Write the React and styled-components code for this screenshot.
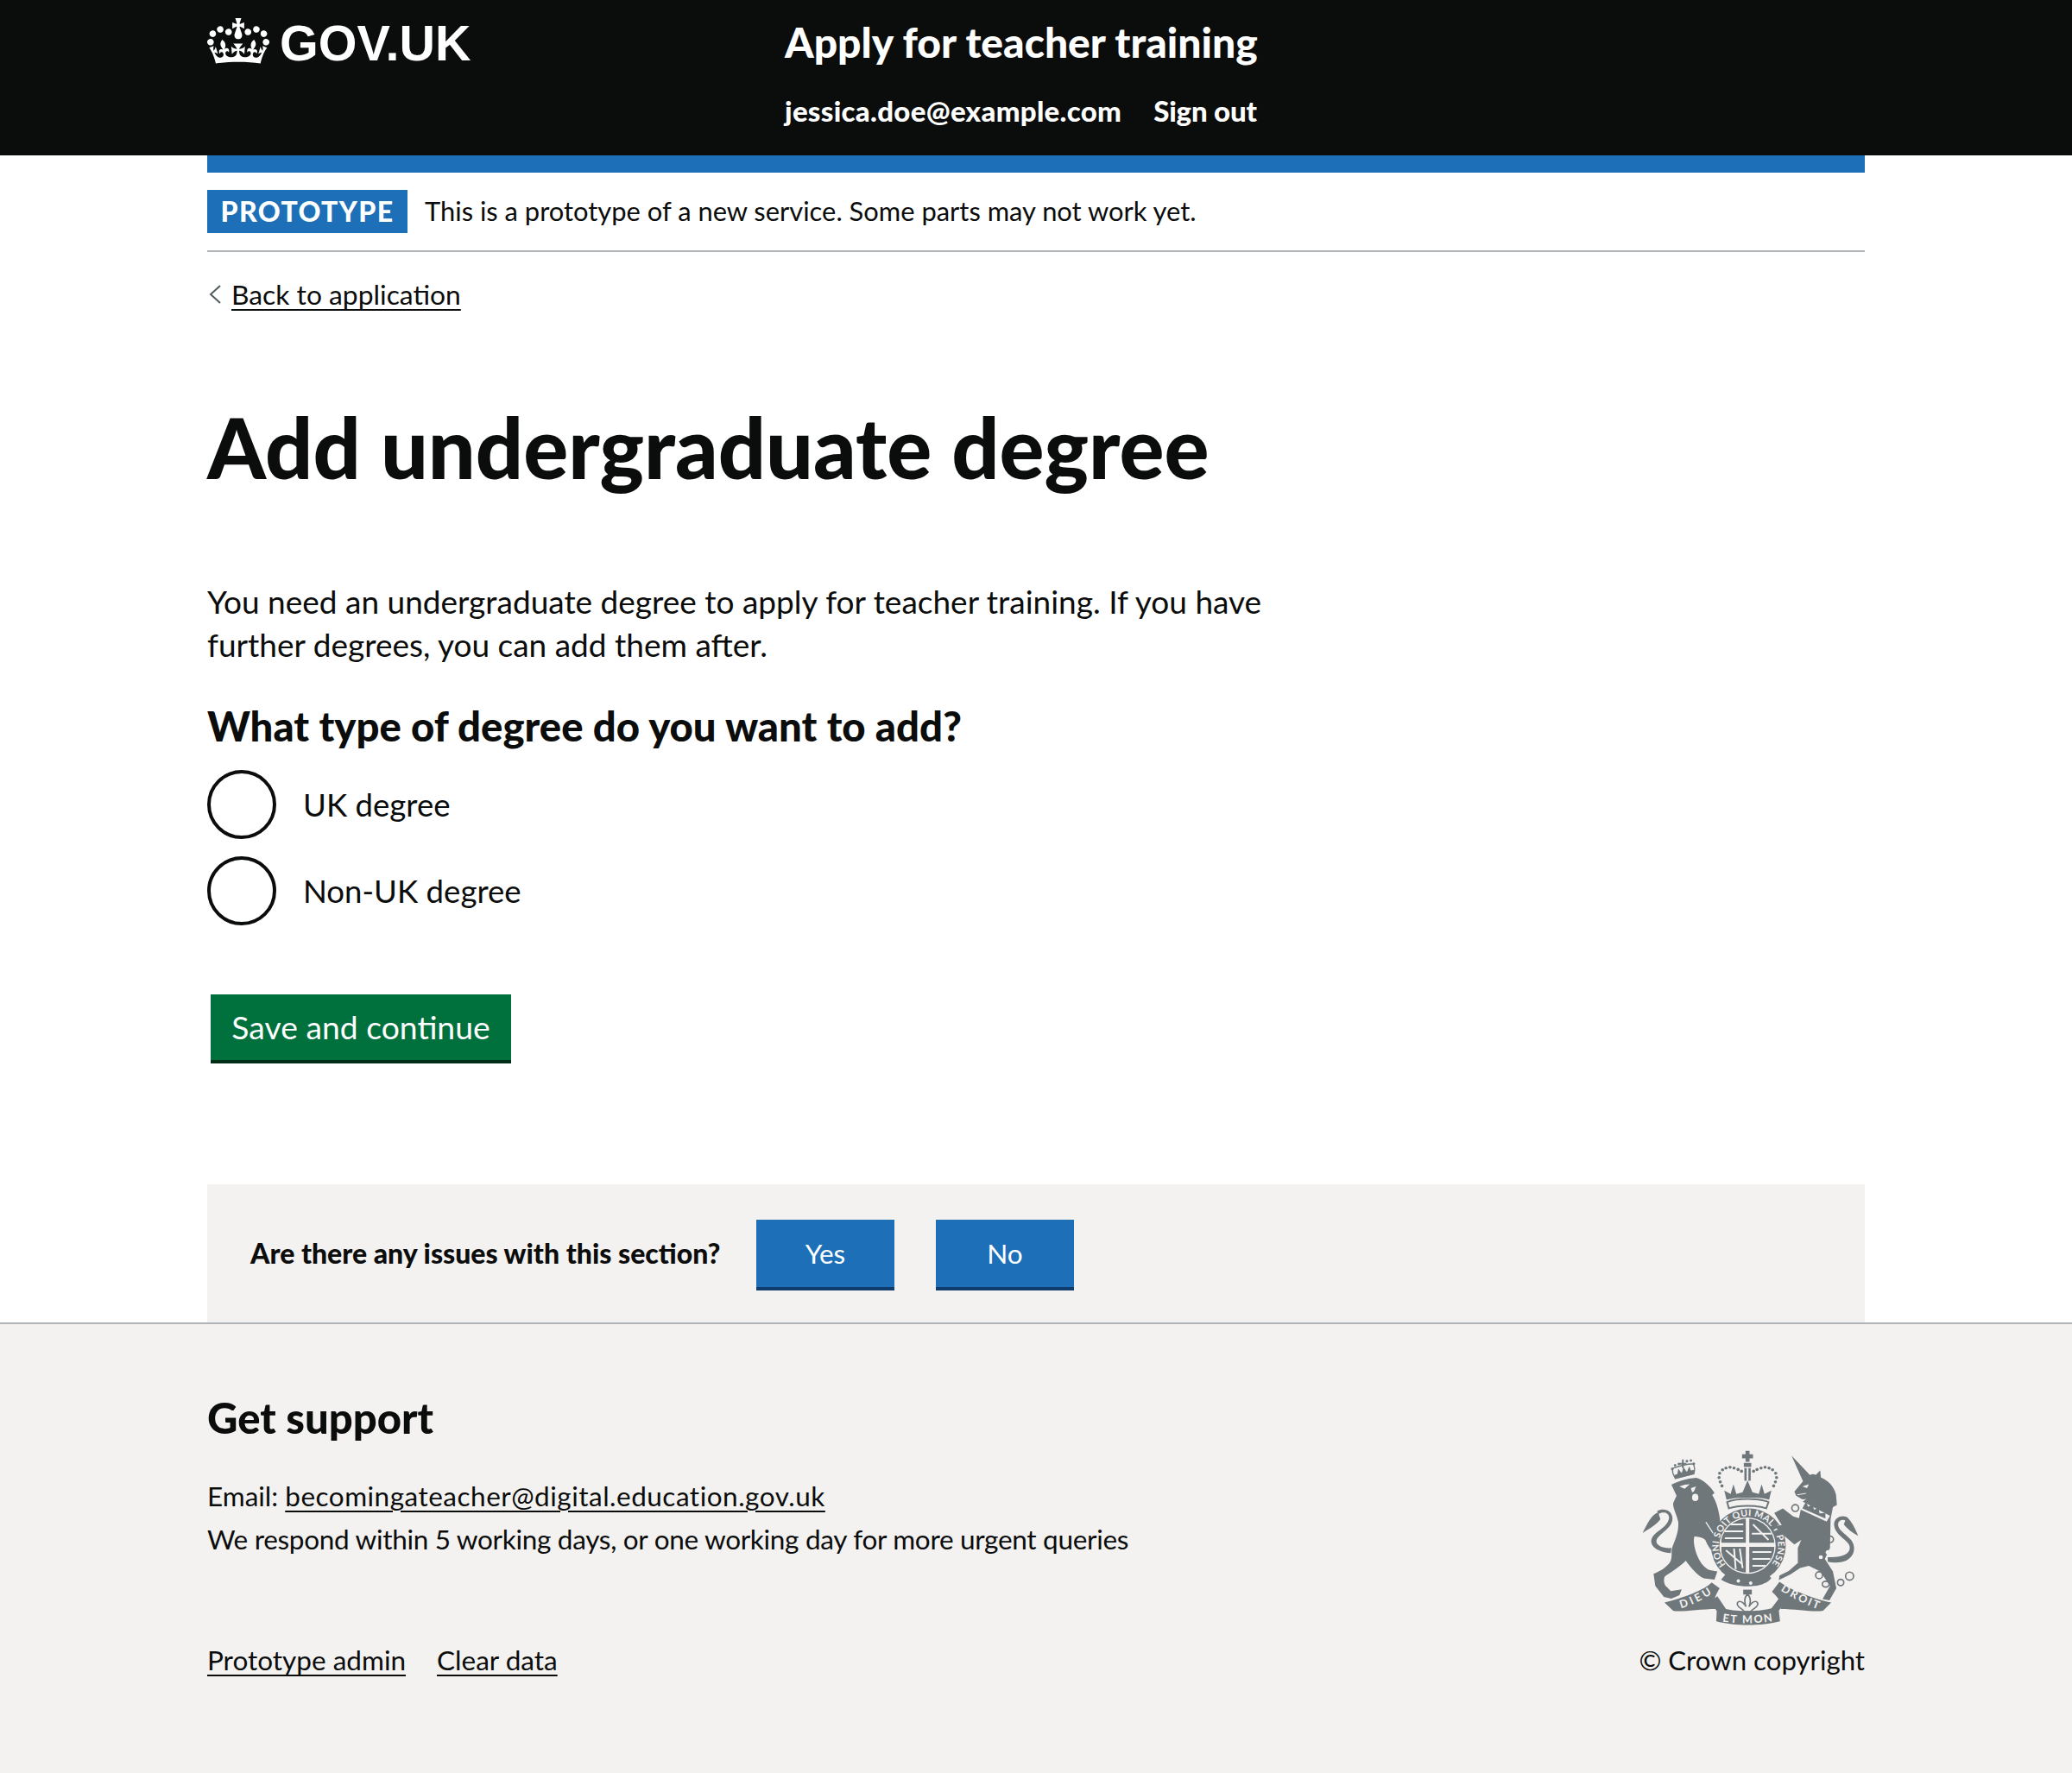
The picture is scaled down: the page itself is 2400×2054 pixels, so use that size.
import React from 'react';
import styled, { createGlobalStyle } from 'styled-components';

const GlobalStyle = createGlobalStyle`
  * { box-sizing: border-box; }
  body {
    margin: 0;
    background: #fff;
    color: #0b0c0c;
    font-family: Lato, "Noto Sans", Arial, sans-serif;
  }
  a { color: #0b0c0c; text-decoration-thickness: 2px; text-underline-offset: 5px; }
`;

const Page = styled.div`
  min-height: 2054px;
  display: flex;
  flex-direction: column;
`;

const Container = styled.div`
  width: 1920px;
  margin: 0 auto;
`;

const Header = styled.header`
  background: #0b0c0c;
  height: 180px;
  color: #fff;
`;

const HeaderInner = styled(Container)`
  display: flex;
`;

const Logo = styled.a`
  width: 669px;
  flex: none;
  display: flex;
  gap: 12px;
  padding-top: 21px;
  color: #fff;
  text-decoration: none;
`;

const Crown = styled.svg`
  width: 72px;
  height: 53px;
  fill: currentColor;
`;

const LogoText = styled.span`
  font-family: "Liberation Sans", Arial, sans-serif;
  font-weight: 700;
  font-size: 57.5px;
  line-height: 58px;
`;

const ServiceColumn = styled.div`
  padding-top: 18px;
`;

const ServiceName = styled.a`
  display: block;
  color: #fff;
  text-decoration: none;
  font-weight: 900;
  font-size: 48px;
  line-height: 62px;
`;

const HeaderNav = styled.nav`
  display: flex;
  gap: 37px;
  margin-top: 28px;
`;

const NavLink = styled.a`
  color: #fff;
  text-decoration: none;
  font-weight: 900;
  font-size: 33px;
  line-height: 40px;
  letter-spacing: ${p => p.$track || 0}px;
`;

const BlueBar = styled.div`
  height: 20px;
  background: #1d70b8;
`;

const PhaseBanner = styled.div`
  display: flex;
  align-items: center;
  gap: 20px;
  padding: 20px 0;
  border-bottom: 2px solid #b1b4b6;
`;

const PhaseTag = styled.strong`
  width: 232px;
  height: 50px;
  background: #1d70b8;
  color: #fff;
  font-size: 32px;
  line-height: 50px;
  font-weight: 900;
  letter-spacing: 1.4px;
  text-align: center;
`;

const BodySmall = styled.span`
  font-size: 30.9px;
  line-height: 50px;
`;

const BackLink = styled.a`
  display: flex;
  align-items: center;
  gap: 12px;
  margin-top: 29px;
  padding-left: 2px;
  width: max-content;
  font-size: 31.8px;
  line-height: 40px;
  text-decoration: none;

  span { text-decoration: underline; text-decoration-thickness: 2px; text-underline-offset: 5px; }
`;

const Chevron = styled.svg`
  width: 14px;
  height: 22px;
  fill: none;
  stroke: #505a5f;
  stroke-width: 2;
`;

const Heading = styled.h1`
  margin: 107px 0 104px;
  font-size: 97px;
  line-height: 100px;
  font-weight: 900;
`;

const Lead = styled.p`
  width: 1280px;
  margin: 0 0 44px;
  font-size: 37px;
  line-height: 50px;
`;

const Question = styled.h2`
  margin: 0 0 26px;
  font-size: 47.3px;
  line-height: 50px;
  font-weight: 900;
`;

const RadioList = styled.div`
  display: flex;
  flex-direction: column;
  gap: 20px;
`;

const RadioRow = styled.label`
  display: flex;
  align-items: center;
  gap: 31px;
  height: 80px;
  font-size: 36.6px;
`;

const RadioCircle = styled.span`
  width: 80px;
  height: 80px;
  border: 4px solid #0b0c0c;
  border-radius: 50%;
  background: #fff;
`;

const Button = styled.button`
  display: block;
  border: 0;
  border-radius: 0;
  color: #fff;
  font-family: inherit;
  cursor: pointer;
`;

const SaveButton = styled(Button)`
  width: 348px;
  height: 76px;
  margin: 80px 0 0 4px;
  background: #00703c;
  box-shadow: 0 4px 0 #002d18;
  font-size: 37.3px;
  line-height: 50px;
  padding: 0;
`;

const FeedbackPanel = styled(Container)`
  display: flex;
  align-items: center;
  height: 160px;
  margin-top: 144px;
  padding-left: 50px;
  background: #f3f2f1;
`;

const FeedbackLabel = styled.strong`
  width: 586px;
  font-size: 32px;
  line-height: 40px;
  font-weight: 900;
`;

const FeedbackButton = styled(Button)`
  width: 160px;
  height: 78px;
  margin: 0 48px 0 0;
  background: #1d70b8;
  box-shadow: 0 4px 0 #0e3c6c;
  font-size: 31.5px;
`;

const Footer = styled.footer`
  flex: 1;
  background: #f3f2f1;
  border-top: 2px solid #b1b4b6;
  padding-top: 83px;
`;

const FooterInner = styled(Container)`
  display: flex;
  justify-content: space-between;
  align-items: flex-end;
`;

const FooterHeading = styled.h2`
  margin: 0 0 41px;
  font-size: 49px;
  line-height: 50px;
  font-weight: 900;
`;

const FooterText = styled.p`
  margin: 0;
  font-size: 31.5px;
  line-height: 50px;
  letter-spacing: ${p => p.$track || 0}px;
`;

const FooterEmail = styled.a`
  letter-spacing: 0.5px;
`;

const MetaLinks = styled.div`
  display: flex;
  gap: 36px;
  margin-top: 95px;
`;

const MetaLink = styled.a`
  font-size: 31.5px;
  line-height: 40px;
`;

const CopyrightColumn = styled.div`
  display: flex;
  flex-direction: column;
  align-items: flex-end;
`;

const Arms = styled.svg`
  display: block;
  width: 253px;
  height: 205px;
  margin: 0 5px 18px 0;
`;

const Copyright = styled.a`
  font-size: 31.2px;
  line-height: 40px;
  text-decoration: none;
`;

const crownPath = 'M25 30.2c3.5 1.5 7.7-.2 9.1-3.7 1.5-3.6-.2-7.8-3.9-9.2-3.6-1.4-7.6.3-9.1 3.9-1.4 3.5.3 7.5 3.9 9zM9 39.5c3.6 1.5 7.8-.2 9.2-3.7 1.5-3.6-.2-7.8-3.9-9.1-3.6-1.5-7.6.2-9.1 3.8-1.4 3.5.3 7.5 3.8 9zM4.4 57.2c3.5 1.5 7.7-.2 9.1-3.8 1.5-3.6-.2-7.7-3.9-9.1-3.5-1.5-7.6.3-9.1 3.8-1.4 3.5.3 7.6 3.9 9.1zm38.3-21.4c3.5 1.5 7.7-.2 9.1-3.8 1.5-3.6-.2-7.7-3.9-9.1-3.6-1.5-7.6.3-9.1 3.8-1.3 3.6.4 7.7 3.9 9.1zm64.4-5.6c-3.6 1.5-7.8-.2-9.1-3.7-1.5-3.6.2-7.8 3.8-9.2 3.6-1.4 7.7.3 9.2 3.9 1.3 3.5-.4 7.5-3.9 9zm15.9 9.3c-3.6 1.5-7.7-.2-9.1-3.7-1.5-3.6.2-7.8 3.7-9.1 3.6-1.5 7.7.2 9.2 3.8 1.5 3.5-.3 7.5-3.8 9zm4.7 17.7c-3.6 1.5-7.8-.2-9.2-3.8-1.5-3.6.2-7.7 3.9-9.1 3.6-1.5 7.7.3 9.2 3.8 1.3 3.5-.4 7.6-3.9 9.1zM89.3 35.8c-3.6 1.5-7.8-.2-9.2-3.8-1.4-3.6.2-7.7 3.9-9.1 3.6-1.5 7.7.3 9.2 3.8 1.4 3.6-.3 7.7-3.9 9.1zM69.7 17.7l8.9 4.7V9.3l-8.9 2.8c-.2-.3-.5-.6-.9-.9L72.4 0H59.6l3.5 11.2c-.3.3-.6.5-.9.9l-8.8-2.8v13.1l8.8-4.7c.3.3.6.7.9.9l-5 15.4v.1c-.2.8-.4 1.6-.4 2.4 0 4.1 3.1 7.5 7 8.1h.2c.3 0 .7.1 1 .1.4 0 .7 0 1-.1h.2c4-.6 7.1-4.1 7.1-8.1 0-.8-.1-1.7-.4-2.4V34l-5.1-15.4c.4-.2.7-.6 1-.9zM66 92.8c16.9 0 32.8 1.1 47.1 3.2 4-16.9 8.9-26.7 14-33.5l-9.6-3.4c1 4.9 1.1 7.2 0 10.2-1.5-1.4-3-4.3-4.2-8.7L108.6 76c2.8-2 5-3.2 7.5-3.3-4.4 9.4-10 11.9-13.6 11.2-4.3-.8-6.3-4.6-5.6-7.9 1-4.7 5.7-5.9 8-.5 4.3-8.7-3-11.4-7.6-8.8 7.1-7.2 7.9-13.5 2.1-21.1-8 6.1-8.1 12.3-4.5 20.8-4.7-5.4-12.1-2.5-9.5 6.2 3.4-5.2 7.9-2 7.2 3.1-.6 4.3-6.4 7.8-13.5 7.2-10.3-.9-10.9-8-11.2-13.8 2.5-.5 7.1 1.8 11 7.3L80.2 60c-4.1 4.4-8 5.3-12.3 5.4 1.4-4.4 8-11.6 8-11.6H55.5s6.4 7.2 7.9 11.6c-4.2-.1-8-1-12.3-5.4l1.4 16.4c3.9-5.5 8.5-7.7 10.9-7.3-.3 5.8-.9 12.8-11.1 13.8-7.2.6-12.9-2.9-13.5-7.2-.7-5 3.8-8.3 7.1-3.1 2.7-8.7-4.6-11.6-9.4-6.2 3.7-8.5 3.6-14.7-4.6-20.8-5.8 7.6-5 13.9 2.2 21.1-4.7-2.6-11.9.1-7.7 8.8 2.3-5.5 7.1-4.2 8.1.5.7 3.3-1.3 7.1-5.7 7.9-3.5.7-9-1.8-13.5-11.2 2.5.1 4.7 1.3 7.5 3.3l-4.7-15.4c-1.2 4.4-2.7 7.2-4.3 8.7-1.1-3-.9-5.3 0-10.2l-9.5 3.4c5 6.9 9.9 16.7 14 33.5 14.8-2.1 30.8-3.2 47.7-3.2z';

const INK = '#6f777b';
const BG = '#f3f2f1';

const dots = (pts, r) => pts.map(([x, y], i) => <circle key={i} cx={x} cy={y} r={r} />);

// traced by eye from the reference, coordinates are crop pixels
const CoatOfArms = () => (
  <Arms viewBox="70 60 760 615" role="img" aria-label="Royal coat of arms">
    <g fill={INK}>
      {/* lion */}
      <path d="M172 180 C190 170 225 158 258 156 C285 162 310 190 322 208 L314 216 C330 240 340 280 342 312 L322 340 L346 410 L326 418 C312 412 300 396 290 372 C278 360 262 362 252 360 C246 380 256 420 272 446 C282 462 294 474 310 478 L332 482 L322 510 L286 506 C268 500 240 470 222 444 C212 456 176 482 150 498 C144 510 146 520 150 530 L170 550 L208 544 L200 564 L172 576 L146 570 L116 532 L110 490 C130 482 160 466 170 444 C176 425 170 410 176 395 C188 365 198 340 196 310 C192 285 178 265 178 244 L190 218 Z" />
      <path d="M170 418 C120 414 90 388 106 362 C120 340 162 326 164 294 C164 276 140 272 128 282 L122 272 C146 258 176 270 176 298 C176 330 136 346 122 368 C112 388 138 402 172 400 Z" />
      <path d="M126 276 C102 284 86 320 72 348 C95 332 118 322 134 300 Z" />
      <path d="M292 310 L330 368" stroke={BG} strokeWidth="4" />
      <path d="M200 186 C212 180 225 178 236 178 L218 194 Z" fill={BG} />
      <path d="M240 192 L258 186 L250 204 L244 206 Z" fill={BG} />
      <ellipse cx="255" cy="224" rx="11" ry="13" fill={BG} />
      {/* lion crown */}
      <path d="M186 158 C176 142 174 130 178 122 C196 116 232 106 248 108 C254 118 254 130 250 142 Z" fill="none" stroke={INK} strokeWidth="4" />
      <path d="M184 160 L252 142 L250 128 L182 146 Z" />
      <path d="M200 104 H209 V92 H215 V104 H224 V110 H215 V122 H209 V110 H200 Z" />
      <path d="M192 146 L196 124 L208 140 L214 118 L226 136 L234 116 L242 134 Z" />
      {dots([[175, 125], [185, 112], [198, 108], [226, 98], [240, 96], [250, 107]], 4.5)}

      {/* crown over the shield */}
      <path d="M430 62 H444 V74 H456 V88 H444 V100 H430 V88 H418 V74 H430 Z" />
      <path d="M424 104 H450 V118 H424 Z" />
      <rect x="426" y="122" width="8" height="44" />
      <rect x="440" y="122" width="8" height="44" />
      {dots([[338, 155], [340, 140], [350, 128], [362, 122], [376, 119], [390, 122], [404, 127], [416, 133],
        [458, 133], [470, 127], [484, 122], [498, 119], [512, 122], [524, 128], [535, 140], [538, 155], [534, 170], [342, 170], [348, 184], [528, 184]], 5.5)}
      <path d="M356 200 L378 212 L388 178 L398 212 L420 206 L437 165 L454 206 L476 212 L486 178 L496 212 L520 200 L512 232 C480 222 392 222 364 232 Z" />
      <path d="M366 240 C400 226 476 226 510 240 L502 262 C470 250 404 250 372 262 Z" fill="none" stroke={INK} strokeWidth="6" />

      {/* garter and shield */}
      <circle cx="440" cy="392" r="130" />
      <circle cx="437" cy="392" r="98" fill={BG} />
      <clipPath id="shieldClip"><circle cx="437" cy="392" r="94" /></clipPath>
      <g clipPath="url(#shieldClip)">
        <path d="M366 296 H431 V382 H346 V296 Z M443 296 H530 V382 H443 Z M346 396 H431 V490 H346 Z M443 396 H530 V490 H443 Z" />
        <path d="M358 318 H422 M354 342 H422 M358 366 H422 M456 318 L510 372 M452 350 H520 M362 408 L418 456 M390 402 L396 474 M410 402 L420 470 M454 414 H520 M454 438 H516 M454 462 H500" stroke={BG} strokeWidth="6" fill="none" />
      </g>
      <path d="M360 492 C395 522 480 530 505 490 L520 505 C490 545 390 540 345 510 Z" />
      <circle cx="405" cy="515" r="6" fill={BG} />
      <circle cx="448" cy="522" r="6" fill={BG} />
      <defs>
        <path id="garterRing" d="M361 458 A103 103 0 1 1 519 458" />
      </defs>
      <text fontFamily="Lato, sans-serif" fontWeight="700" fontSize="32" fill={BG}>
        <textPath href="#garterRing" textLength="462" lengthAdjust="spacing">HONI SOIT QUI MAL Y PENSE</textPath>
      </text>

      {/* unicorn */}
      <path d="M590 78 L654 146 C662 142 668 142 674 146 L690 130 L692 154 C716 164 738 184 745 215 L748 250 L734 258 L726 300 L724 400 L706 438 L734 482 L746 540 L722 582 L698 578 L724 532 L690 482 L650 462 L620 470 L586 492 L546 512 L548 496 L580 480 L612 452 L612 400 L624 372 L600 388 L570 362 L530 325 L556 320 L530 278 L560 262 L596 290 L616 296 L628 240 L660 214 C650 228 634 232 626 230 L606 218 L600 204 L630 168 Z" />
      <path d="M716 432 C775 435 802 415 790 388 C778 368 738 352 738 316 C740 292 772 282 786 296 L780 306 C768 298 752 304 752 320 C754 340 782 352 800 376 C816 402 806 430 780 444 C760 452 736 452 716 448 Z" />
      <path d="M782 292 C800 308 812 335 822 358 C800 345 785 335 772 318 Z" />
      <path d="M624 236 L724 288 L712 308 L616 264 Z" fill={BG} />
      <path d="M632 254 L640 240 L648 256 L664 248 L668 266 L684 262 L688 280 L708 278 L708 298 L628 262 Z" />
      <path d="M628 186 L650 178 L644 192 Z" fill={BG} />
      <path d="M610 215 L640 210" stroke={BG} strokeWidth="3" />
      <g fill="none" stroke={INK} strokeWidth="5">
        <circle cx="603" cy="261" r="12" />
        <circle cx="592" cy="344" r="12" />
        <circle cx="725" cy="370" r="11" />
        <circle cx="686" cy="495" r="12" />
        <ellipse cx="709" cy="526" rx="12" ry="10" />
        <circle cx="761" cy="520" r="11" />
        <circle cx="792" cy="498" r="14" />
      </g>
      <circle cx="717" cy="415" r="8" fill={BG} />
      <circle cx="692" cy="432" r="7" fill={BG} />

      {/* motto ribbons */}
      <path d="M148 590 C210 575 290 545 312 520 L340 540 C322 570 316 585 328 612 C270 612 200 625 178 618 Z" />
      <path d="M308 585 L330 620 L328 655 C390 672 490 672 550 655 L546 618 L572 580 L552 568 L520 610 C480 622 400 622 362 612 L332 568 Z" />
      <path d="M728 590 C670 578 590 548 548 518 L522 552 C546 575 560 595 552 612 C610 612 670 625 700 618 Z" />
      <path d="M422 545 H452 V562 H422 Z" />
      <path d="M437 560 C450 574 448 590 442 604 C458 578 476 584 472 598 C468 610 452 612 448 622 H426 C422 612 406 610 402 598 C398 584 416 578 432 604 C426 590 424 574 437 560 Z" fill="none" stroke={INK} strokeWidth="5" />
      <defs>
        <path id="mottoLeft" d="M205 610 C245 600 285 578 322 552" />
        <path id="mottoRight" d="M552 548 C590 572 635 596 680 612" />
        <path id="mottoMid" d="M350 656 C400 664 480 664 528 654" />
      </defs>
      <text fontFamily="Lato, sans-serif" fontWeight="700" fontSize="38" fill={BG}>
        <textPath href="#mottoLeft" textLength="120" lengthAdjust="spacing">DIEU</textPath>
      </text>
      <text fontFamily="Lato, sans-serif" fontWeight="700" fontSize="38" fill={BG}>
        <textPath href="#mottoRight" textLength="145" lengthAdjust="spacing">DROIT</textPath>
      </text>
      <text fontFamily="Lato, sans-serif" fontWeight="700" fontSize="38" fill={BG}>
        <textPath href="#mottoMid" textLength="175" lengthAdjust="spacing">ET MON</textPath>
      </text>
    </g>
  </Arms>
);

export default function App() {
  return (
    <Page>
      <GlobalStyle />
      <Header>
        <HeaderInner>
          <Logo href="#">
            <Crown viewBox="0 0 132 97" aria-hidden="true"><path d={crownPath} /></Crown>
            <LogoText>GOV.UK</LogoText>
          </Logo>
          <ServiceColumn>
            <ServiceName href="#">Apply for teacher training</ServiceName>
            <HeaderNav>
              <NavLink href="#" $track={0.3}>jessica.doe@example.com</NavLink>
              <NavLink href="#" $track={-0.2}>Sign out</NavLink>
            </HeaderNav>
          </ServiceColumn>
        </HeaderInner>
      </Header>
      <Container>
        <BlueBar />
        <PhaseBanner>
          <PhaseTag>PROTOTYPE</PhaseTag>
          <BodySmall>This is a prototype of a new service. Some parts may not work yet.</BodySmall>
        </PhaseBanner>
        <BackLink href="#">
          <Chevron viewBox="0 0 14 22" aria-hidden="true"><path d="M13 1 L2 11 L13 21" /></Chevron>
          <span>Back to application</span>
        </BackLink>
        <Heading>Add undergraduate degree</Heading>
        <Lead>You need an undergraduate degree to apply for teacher training. If you have further degrees, you can add them after.</Lead>
        <Question>What type of degree do you want to add?</Question>
        <RadioList>
          <RadioRow><RadioCircle />UK degree</RadioRow>
          <RadioRow><RadioCircle />Non-UK degree</RadioRow>
        </RadioList>
        <SaveButton>Save and continue</SaveButton>
      </Container>
      <FeedbackPanel>
        <FeedbackLabel>Are there any issues with this section?</FeedbackLabel>
        <FeedbackButton>Yes</FeedbackButton>
        <FeedbackButton>No</FeedbackButton>
      </FeedbackPanel>
      <Footer>
        <FooterInner>
          <div>
            <FooterHeading>Get support</FooterHeading>
            <FooterText>Email: <FooterEmail href="#">becomingateacher@digital.education.gov.uk</FooterEmail></FooterText>
            <FooterText $track={-0.3}>We respond within 5 working days, or one working day for more urgent queries</FooterText>
            <MetaLinks>
              <MetaLink href="#">Prototype admin</MetaLink>
              <MetaLink href="#">Clear data</MetaLink>
            </MetaLinks>
          </div>
          <CopyrightColumn>
            <CoatOfArms />
            <Copyright href="#">© Crown copyright</Copyright>
          </CopyrightColumn>
        </FooterInner>
      </Footer>
    </Page>
  );
}
